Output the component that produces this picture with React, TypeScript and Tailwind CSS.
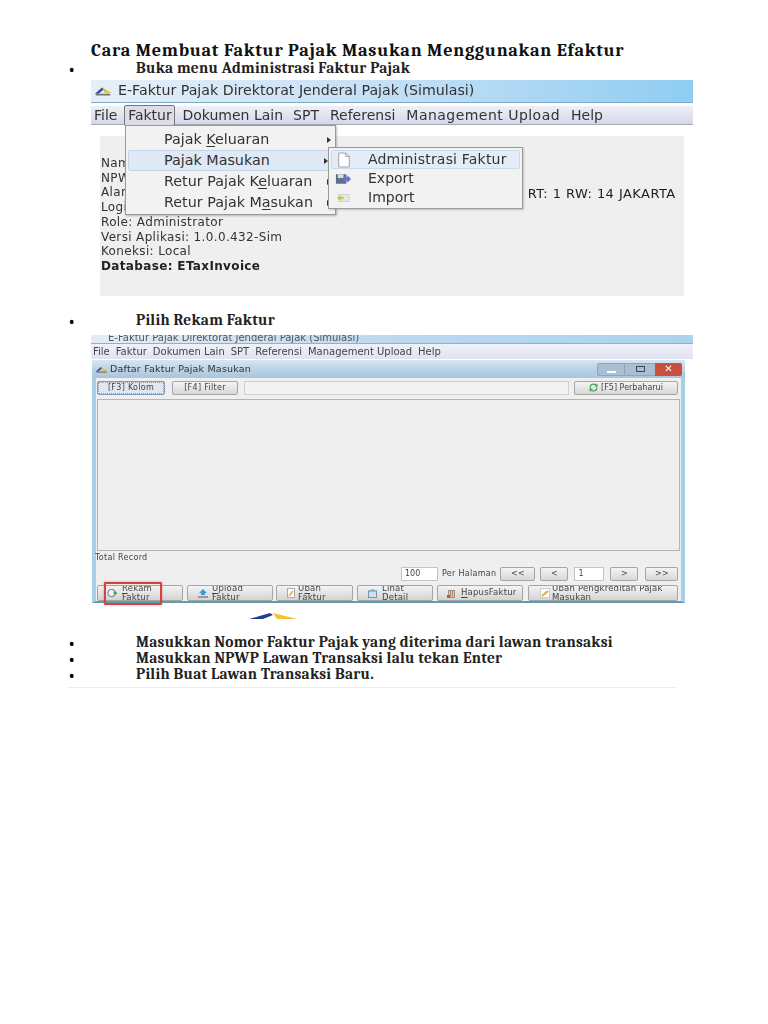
import type { ReactNode } from "react";
import { RefreshCw } from "lucide-react";

const serif = "font-['Cambria','Liberation_Serif','DejaVu_Serif',serif]";

const Bullet = ({ text, className = "" }: { text: string; className?: string }) => (
  <div className={`flex items-center pl-[67px] h-[16px] ${serif} ${className}`}>
    <span className="w-[69px] h-[16px] text-[21px] leading-[16px] text-black">•</span>
    <span className="text-[15.4px] leading-none font-bold text-[#222] whitespace-nowrap tracking-[0.25px]">{text}</span>
  </div>
);

const U = ({ children }: { children: string }) => <span className="underline underline-offset-2">{children}</span>;

const Arrow = () => <span className="absolute right-[4px] top-1/2 -translate-y-1/2 border-y-[3px] border-l-[4px] border-y-transparent border-l-[#333]" />;

const AppLogo = ({ className = "" }: { className?: string }) => (
  <svg viewBox="0 0 20 12" className={className}>
    <path d="M1 9 L9 2 L11 4 L5 9 Z" fill="#2b4f9e" />
    <path d="M9 2 L19 8 L12 8 Z" fill="#e8b92e" />
    <rect x="2" y="9" width="16" height="2" fill="#777" />
  </svg>
);

const MainMenu = () => {
  const items = [
    { label: <span>Pajak <U>K</U>eluaran</span>, active: false },
    { label: <span>Pajak Masukan</span>, active: true },
    { label: <span>Retur Pajak K<U>e</U>luaran</span>, active: false },
    { label: <span>Retur Pajak M<U>a</U>sukan</span>, active: false },
  ];
  return (
    <div className="absolute left-[34px] top-[45px] w-[211px] h-[90px] bg-[#f2f2f2] border border-[#9a9a9a] shadow-[1px_1px_2px_rgba(0,0,0,0.25)] pt-[3px] z-10">
      {items.map((item, i) => (
        <div
          key={i}
          className={`relative h-[21.2px] flex items-center text-[14.3px] text-[#333] ${item.active ? "mx-[2px] pl-[35px] bg-[#dfe9f5] border border-[#c5d6ea] rounded-[2px]" : "pl-[38px]"}`}
        >
          {item.label}
          <Arrow />
        </div>
      ))}
    </div>
  );
};

const SubMenu = () => (
  <div className="absolute left-[237px] top-[67px] w-[195px] h-[62px] bg-[#f2f2f2] border border-[#9a9a9a] shadow-[1px_1px_2px_rgba(0,0,0,0.2)] pt-[2px] z-20 text-[14px] text-[#333]">
    <div className="h-[19px] mx-[2px] flex items-center bg-[#e4edf7] border border-[#c9daec] rounded-[2px]">
      <span className="w-[36px] shrink-0 pl-[5px]">
        <svg viewBox="0 0 16 18" className="w-[14px] h-[16px]">
          <path d="M2 1 H10 L14 5 V17 H2 Z" fill="#fff" stroke="#999" />
          <path d="M10 1 V5 H14" fill="none" stroke="#999" />
        </svg>
      </span>
      <span className="tracking-[0.2px] whitespace-nowrap">Administrasi Faktur</span>
    </div>
    <div className="h-[19px] flex items-center">
      <span className="w-[39px] shrink-0 pl-[6px]">
        <svg viewBox="0 0 18 12" className="w-[17px] h-[12px]">
          <rect x="1" y="1" width="11" height="10" fill="#5c6f8c" />
          <rect x="3" y="1" width="6" height="4" fill="#d8dee8" />
          <path d="M9 4 H13 V2 L17 6 L13 10 V8 H9 Z" fill="#6a6fd0" />
        </svg>
      </span>
      <span>Export</span>
    </div>
    <div className="h-[19px] flex items-center">
      <span className="w-[39px] shrink-0 pl-[6px]">
        <svg viewBox="0 0 18 12" className="w-[16px] h-[12px]">
          <rect x="4" y="2" width="12" height="8" fill="#e6e6e6" stroke="#cfcfcf" />
          <path d="M2 6 L7 3 V9 Z" fill="#b5cf4a" />
          <rect x="6" y="5" width="4" height="2" fill="#b5cf4a" />
        </svg>
      </span>
      <span>Import</span>
    </div>
  </div>
);

const FirstShot = () => (
  <div className="relative ml-[91px] w-[602px] h-[216px] font-['DejaVu_Sans',sans-serif] blur-[0.4px]">
    <div className="h-[23px] flex items-center bg-gradient-to-r from-[#e6eff8] via-[#c4dff5] to-[#8fcdf2] border-b border-[#7faac8]">
      <AppLogo className="w-[18px] h-[12px] ml-[3px]" />
      <span className="ml-[6px] text-[14.2px] text-[#333] whitespace-nowrap">E-Faktur Pajak Direktorat Jenderal Pajak (Simulasi)</span>
    </div>
    <div className="mt-[3px] h-[19px] flex items-center pl-[3px] bg-gradient-to-b from-[#eef0f8] to-[#d4d8e8] border-b border-[#a8a8b0] text-[14px] text-[#333] whitespace-nowrap">
      <span>File</span>
      <span className="ml-[7px] w-[51px] h-[21px] leading-[19px] text-center bg-[#dcdde6] border border-[#777] rounded-[2px]">Faktur</span>
      <span className="ml-[7px]">Dokumen Lain</span>
      <span className="ml-[10px]">SPT</span>
      <span className="ml-[11px]">Referensi</span>
      <span className="ml-[11px] tracking-[0.47px]">Management Upload</span>
      <span className="ml-[11px]">Help</span>
    </div>
    <div className="ml-[9px] mt-[11px] w-[584px] h-[160px] bg-[#efefef] pl-[1px] pt-[20px] text-[12px] leading-[14.7px] text-[#333] tracking-[0.35px]">
      <div>Nama</div>
      <div>NPWP</div>
      <div className="flex h-[14.7px]">
        <span>Alamat</span>
        <span className="ml-[382px] mt-[2px] text-[13px] tracking-[0.45px] font-medium text-[#222]">RT: 1 RW: 14 JAKARTA</span>
      </div>
      <div>Login</div>
      <div>Role: Administrator</div>
      <div>Versi Aplikasi: 1.0.0.432-Sim</div>
      <div>Koneksi: Local</div>
      <div className="font-bold text-[#222]">Database: ETaxInvoice</div>
    </div>
    <MainMenu />
    <SubMenu />
  </div>
);

const ToolButton = ({ label, className = "", focus = false }: { label: string; className?: string; focus?: boolean }) => (
  <div className={`h-[14px] flex items-center justify-center rounded-[2px] border ${focus ? "border-[#7f9db9] bg-[#dfe8f0] outline-1 outline-dotted -outline-offset-2 outline-[#99a]" : "border-[#a5a5a5] bg-gradient-to-b from-[#f4f4f4] to-[#d8d8d8]"} text-[8px] text-[#444] tracking-[0.3px] whitespace-nowrap ${className}`}>
    {label}
  </div>
);

const ActionButton = ({ children, className = "" }: { children: ReactNode; className?: string }) => (
  <div className={`h-[16px] flex items-center rounded-[2px] border border-[#a5a5a5] bg-gradient-to-b from-[#f4f4f4] to-[#d4d4d4] text-[8.5px] leading-[9.5px] text-[#444] overflow-hidden tracking-[0.2px] ${className}`}>
    {children}
  </div>
);

const SecondShot = () => (
  <div className="relative ml-[91px] w-[602px] h-[283px] font-['DejaVu_Sans',sans-serif] blur-[0.4px]">
    <div className="h-[9px] overflow-hidden bg-gradient-to-r from-[#e4edf6] via-[#bcd9f0] to-[#a9d3ee] text-[10px] leading-[5px] text-[#555] pl-[17px] whitespace-nowrap border-b border-[#8fb2cc]">
      E-Faktur Pajak Direktorat Jenderal Pajak (Simulasi)
    </div>
    <div className="h-[15px] flex items-center gap-[6px] pl-[2px] bg-gradient-to-b from-[#f0f2fa] to-[#e0e3f0] text-[10px] text-[#444] whitespace-nowrap">
      <span>File</span>
      <span>Faktur</span>
      <span>Dokumen Lain</span>
      <span>SPT</span>
      <span>Referensi</span>
      <span>Management Upload</span>
      <span>Help</span>
    </div>
    <div className="ml-[1px] mt-[1px] w-[593px] h-[243px] flex flex-col bg-[#efefef] border-x-[4px] border-b-[2px] border-x-[#a7cfe8] border-b-[#5f9cb0] rounded-t-[3px]">
      <div className="-mx-[4px] h-[18px] flex items-center bg-gradient-to-b from-[#d8e6f2] via-[#bcd3e6] to-[#a9c6dd] pl-[3px] text-[9.5px] text-[#333] tracking-[0.2px]">
        <AppLogo className="w-[13px] h-[9px]" />
        <span className="ml-[2px]">Daftar Faktur Pajak Masukan</span>
        <div className="ml-auto mr-[3px] flex items-center">
          <div className="w-[28px] h-[13px] flex items-end justify-center pb-[2px] bg-[#a9c0d4] border border-[#8da6ba] rounded-l-[2px]">
            <div className="w-[9px] h-[2px] bg-white" />
          </div>
          <div className="w-[30px] h-[13px] flex items-center justify-center bg-[#a9c0d4] border-y border-[#8da6ba]">
            <div className="w-[9px] h-[6px] border-[1.5px] border-[#445]" />
          </div>
          <div className="w-[27px] h-[13px] flex items-center justify-center bg-[#c9503f] text-white text-[10px] font-bold leading-none rounded-r-[2px]">✕</div>
        </div>
      </div>
      <div className="flex items-center mt-[1px] pl-[1px] pr-[3px] h-[17px]">
        <ToolButton label="[F3] Kolom" focus className="w-[68px]" />
        <ToolButton label="[F4] Filter" className="ml-[7px] w-[66px]" />
        <div className="ml-[6px] flex-1 h-[14px] bg-[#f2f2f2] border border-[#cfcfcf]" />
        <div className="ml-[5px] w-[104px] h-[14px] flex items-center justify-center gap-[3px] rounded-[2px] border border-[#a5a5a5] bg-gradient-to-b from-[#f4f4f4] to-[#d8d8d8] text-[8px] text-[#444] whitespace-nowrap">
          <RefreshCw className="w-[9px] h-[9px] text-[#3fa34d]" strokeWidth={3} />
          [F5] Perbaharui
        </div>
      </div>
      <div className="mt-[3px] ml-[1px] mr-[1px] h-[152px] bg-[#efefef] border border-[#b5b5b5]" />
      <div className="mt-[1px] ml-[-1px] text-[8px] leading-[11px] text-[#444] tracking-[0.3px]">Total Record</div>
      <div className="mt-[4px] flex items-center h-[14px] pl-[305px] text-[8px] text-[#444]">
        <div className="w-[37px] h-[14px] bg-white border border-[#c4c4c4] pl-[3px] leading-[12px]">100</div>
        <span className="ml-[4px] tracking-[0.3px] whitespace-nowrap">Per Halaman</span>
        <ToolButton label="<<" className="ml-[4px] w-[35px]" />
        <ToolButton label="<" className="ml-[5px] w-[28px]" />
        <div className="ml-[6px] w-[30px] h-[14px] bg-white border border-[#c4c4c4] pl-[3px] leading-[12px]">1</div>
        <ToolButton label=">" className="ml-[6px] w-[28px]" />
        <ToolButton label=">>" className="ml-[7px] w-[33px]" />
      </div>
      <div className="mt-[4px] flex pl-[1px]">
        <ActionButton className="w-[86px] pl-[9px] gap-[4px]">
          <svg viewBox="0 0 12 10" className="w-[11px] h-[10px] shrink-0">
            <circle cx="5" cy="5" r="4" fill="#f4f4f4" stroke="#666" />
            <path d="M7 5 H11 M9 3 V7" stroke="#3fa34d" strokeWidth="1.5" />
          </svg>
          <span><U>R</U>ekam<br />Faktur</span>
        </ActionButton>
        <ActionButton className="ml-[4px] w-[86px] pl-[10px] gap-[4px]">
          <svg viewBox="0 0 10 9" className="w-[10px] h-[9px] shrink-0">
            <rect y="7" width="10" height="2" fill="#999" />
            <path d="M5 0 L9 4 H7 V6 H3 V4 H1 Z" fill="#3f9bd8" />
          </svg>
          <span><U>U</U>pload<br />Faktur</span>
        </ActionButton>
        <ActionButton className="ml-[3px] w-[77px] pl-[10px] gap-[3px]">
          <svg viewBox="0 0 8 10" className="w-[8px] h-[10px] shrink-0">
            <rect x="0.5" y="0.5" width="7" height="9" fill="#fff" stroke="#aaa" />
            <path d="M2 8 L6 3" stroke="#e0a93a" strokeWidth="1.5" />
          </svg>
          <span>U<U>b</U>ah<br />Faktur</span>
        </ActionButton>
        <ActionButton className="ml-[4px] w-[76px] pl-[10px] gap-[5px]">
          <svg viewBox="0 0 9 9" className="w-[9px] h-[9px] shrink-0">
            <rect x="0.5" y="2" width="8" height="6.5" fill="#cfe0ee" stroke="#6f93ad" />
            <path d="M2 2 L4.5 0 L7 2" fill="none" stroke="#6f93ad" />
          </svg>
          <span>Lihat<br />Detail</span>
        </ActionButton>
        <ActionButton className="ml-[4px] w-[86px] pl-[9px] gap-[5px]">
          <svg viewBox="0 0 9 10" className="w-[9px] h-[10px] shrink-0">
            <rect x="1" y="2" width="7" height="8" fill="#a88f7a" />
            <path d="M2.5 3 V9 M4.5 3 V9 M6.5 3 V9" stroke="#e8e0d8" strokeWidth="0.7" />
            <rect x="0" y="7" width="3" height="3" fill="#d8503a" />
          </svg>
          <span className="whitespace-nowrap"><U>H</U>apusFaktur</span>
        </ActionButton>
        <ActionButton className="ml-[5px] w-[150px] pl-[11px] gap-[2px]">
          <svg viewBox="0 0 10 10" className="w-[10px] h-[10px] shrink-0">
            <rect x="0.5" y="0.5" width="9" height="9" fill="#fff" stroke="#ccc" />
            <path d="M2 8 L8 3" stroke="#e0a93a" strokeWidth="2" />
          </svg>
          <span className="whitespace-nowrap">Ubah Pengkreditan Pajak<br />Masukan</span>
        </ActionButton>
      </div>
    </div>
    <svg viewBox="0 0 50 6" className="ml-[158px] mt-[10px] w-[50px] h-[6px]">
      <path d="M0 6 L21 0 L24 2 L14 6 Z" fill="#1f3f93" />
      <path d="M24 0 L48 6 L28 6 Z" fill="#f2c230" />
    </svg>
    <div className="absolute left-[13px] top-[247px] w-[58px] h-[23px] border-2 border-[#d8413f] rounded-[1px] shadow-[0_0_2px_rgba(200,60,60,0.6)]" />
  </div>
);

export default function App() {
  return (
    <div className="w-[768px] h-[1024px] bg-white overflow-hidden">
      <div className={`pt-[41px] pl-[91px] text-[18.2px] leading-[20px] font-bold text-[#111] whitespace-nowrap tracking-[0.72px] ${serif}`}>
        Cara Membuat Faktur Pajak Masukan Menggunakan Efaktur
      </div>
      <Bullet text="Buka menu Administrasi Faktur Pajak" className="mb-[3px]" />
      <FirstShot />
      <Bullet text="Pilih Rekam Faktur" className="mt-[17px] mb-[6px]" />
      <SecondShot />
      <div className="mt-[17px]">
        <Bullet text="Masukkan Nomor Faktur Pajak yang diterima dari lawan transaksi" />
        <Bullet text="Masukkan NPWP Lawan Transaksi lalu tekan Enter" />
        <Bullet text="Pilih Buat Lawan Transaksi Baru." />
      </div>
      <div className="ml-[67px] mt-[4px] w-[610px] h-[1px] bg-[#eeeeee]" />
    </div>
  );
}
